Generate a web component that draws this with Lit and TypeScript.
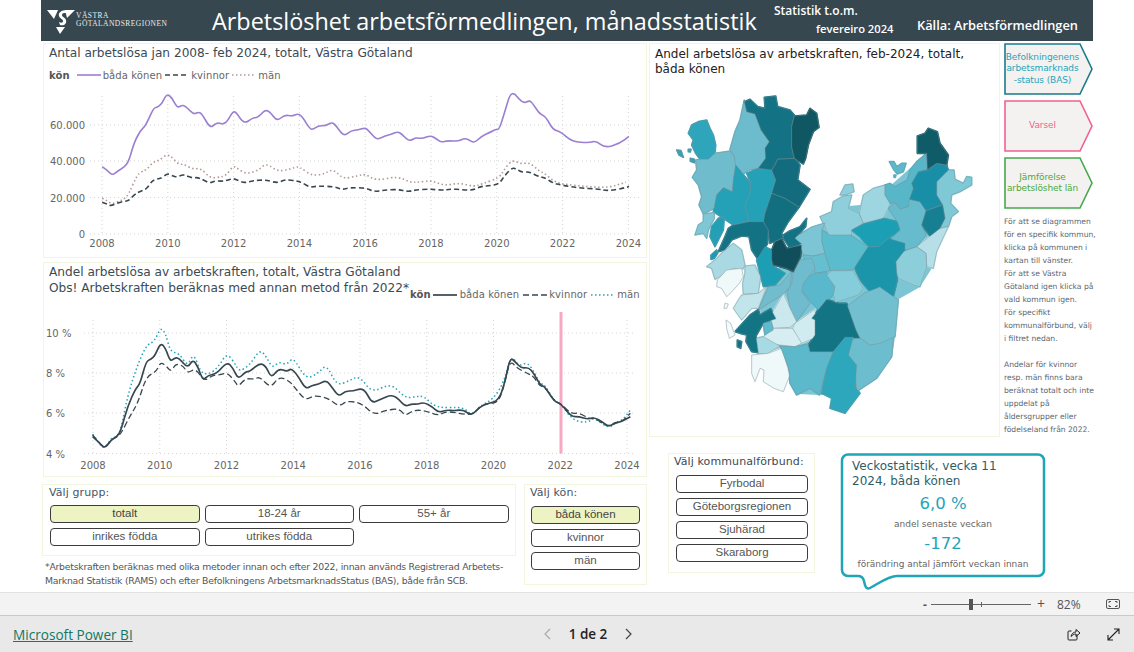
import { LitElement, css, html, svg } from 'lit';
import { customElement } from 'lit/decorators.js';

type P = [number, number];
type Line = { color: string; width: number; dash?: string; pts: P[] };

// traced from the report: x,y in crop units, scaled down in toPath()
const c1Both: P[] = [[283,503],[297,513],[311,530],[330,513],[345,505],[358,487],[373,430],[390,395],[405,380],[427,327],[437,325],[450,315],[464,284],[478,295],[493,327],[508,318],[517,322],[530,337],[542,345],[553,339],[563,345],[585,387],[600,375],[610,371],[620,376],[633,368],[650,336],[660,342],[680,375],[705,357],[715,356],[727,348],[740,332],[755,340],[772,367],[795,347],[815,352],[830,344],[842,350],[865,390],[875,391],[887,381],[910,380],[925,370],[935,376],[955,405],[965,408],[980,395],[1000,393],[1020,386],[1030,396],[1050,420],[1060,418],[1075,411],[1095,405],[1110,398],[1122,405],[1140,424],[1150,424],[1160,416],[1180,419],[1203,409],[1220,420],[1232,430],[1250,425],[1280,427],[1295,419],[1307,420],[1325,433],[1345,412],[1370,400],[1385,391],[1395,392],[1410,340],[1425,285],[1438,283],[1450,300],[1465,313],[1480,304],[1490,315],[1508,345],[1525,352],[1545,392],[1568,399],[1599,428],[1648,432],[1666,425],[1691,447],[1733,433],[1758,412]];
const c1Kv: P[] = [[283,610],[297,615],[308,621],[325,612],[345,607],[358,605],[375,585],[390,577],[408,570],[423,545],[437,540],[450,537],[466,523],[480,530],[492,535],[508,527],[520,530],[535,537],[550,535],[565,542],[585,553],[600,545],[620,547],[635,543],[650,538],[665,545],[682,552],[705,545],[740,542],[775,553],[795,541],[830,546],[845,552],[865,565],[885,561],[935,563],[955,572],[975,566],[1020,566],[1045,578],[1070,574],[1110,571],[1140,578],[1160,573],[1200,570],[1235,574],[1260,570],[1290,572],[1320,574],[1345,562],[1370,560],[1395,555],[1410,530],[1432,505],[1445,512],[1460,520],[1480,518],[1505,533],[1525,537],[1545,552],[1568,558],[1618,567],[1672,570],[1702,576],[1753,565],[1758,562]];
const c1Man: P[] = [[283,598],[297,605],[310,615],[330,607],[345,600],[358,585],[380,530],[395,517],[408,512],[425,490],[445,483],[464,466],[480,475],[495,495],[515,497],[535,510],[560,508],[585,537],[610,535],[630,530],[650,500],[665,510],[685,525],[720,515],[742,492],[775,518],[810,510],[830,502],[845,510],[870,530],[905,525],[925,512],[940,520],[960,540],[1000,530],[1020,525],[1050,545],[1110,532],[1145,550],[1170,550],[1205,544],[1240,560],[1285,552],[1325,563],[1345,555],[1395,537],[1410,510],[1432,482],[1455,495],[1480,490],[1505,515],[1525,525],[1545,545],[1568,555],[1640,563],[1700,566],[1750,550]];

const c2Both: P[] = [[221,530],[235,545],[250,567],[265,540],[280,530],[290,510],[305,440],[325,385],[335,373],[350,303],[362,298],[372,285],[385,248],[397,265],[408,305],[420,293],[430,295],[450,325],[463,298],[475,320],[487,362],[500,345],[520,342],[545,305],[560,325],[572,358],[590,335],[600,335],[625,308],[640,320],[652,355],[670,325],[690,335],[700,325],[715,345],[735,388],[750,376],[765,373],[785,360],[800,385],[815,410],[830,393],[850,393],[868,385],[880,395],[895,430],[915,418],[940,405],[955,412],[975,440],[990,432],[1005,433],[1020,427],[1040,440],[1055,458],[1075,450],[1095,452],[1115,449],[1135,468],[1155,440],[1175,430],[1200,422],[1215,370],[1228,292],[1240,305],[1255,325],[1272,322],[1285,340],[1300,375],[1312,380],[1335,425],[1350,430],[1375,470],[1395,470],[1415,478],[1430,472],[1450,485],[1465,500],[1480,490],[1500,483],[1518,470]];
const c2Kv: P[] = [[221,525],[235,545],[250,565],[265,540],[280,530],[290,520],[310,470],[330,430],[350,350],[375,335],[385,305],[400,320],[410,335],[422,310],[440,318],[450,340],[470,325],[490,365],[510,345],[530,345],[545,337],[565,365],[572,380],[590,355],[610,358],[625,350],[650,385],[670,350],[695,362],[710,385],[735,422],[755,405],[790,415],[815,440],[835,422],[870,430],[900,465],[925,452],[960,445],[975,468],[995,450],[1025,452],[1055,468],[1075,452],[1135,468],[1155,440],[1175,430],[1200,428],[1215,370],[1228,300],[1245,325],[1270,340],[1285,350],[1300,380],[1312,380],[1335,425],[1350,430],[1375,462],[1395,458],[1420,478],[1430,472],[1450,490],[1465,500],[1480,487],[1500,483],[1518,460]];
const c2Man: P[] = [[221,523],[235,548],[250,568],[265,535],[280,530],[290,505],[305,410],[325,330],[350,255],[370,245],[385,202],[397,220],[408,275],[430,280],[450,320],[465,278],[480,335],[500,345],[525,320],[545,278],[565,312],[575,335],[600,315],[625,268],[640,290],[655,325],[670,305],[690,315],[705,290],[735,358],[765,340],[785,312],[810,378],[840,362],[865,347],[895,400],[940,368],[975,415],[1000,410],[1020,408],[1050,445],[1115,440],[1135,468],[1155,438],[1190,415],[1215,360],[1230,285],[1250,320],[1270,305],[1290,345],[1300,370],[1312,375],[1335,425],[1350,430],[1380,482],[1415,488],[1430,472],[1465,505],[1480,490],[1500,480],[1518,450]];

// smooth path through the midpoints, the report draws its lines smoothed
const toPath = (pts: P[], sx: number, ox: number, oy: number) => {
  const p = pts.map(([x, y]): P => [x / sx - ox, y / 3 - oy]);
  let d = `M${p[0][0].toFixed(1)} ${p[0][1].toFixed(1)}`;
  for (let i = 1; i < p.length - 1; i++) {
    const mx = (p[i][0] + p[i + 1][0]) / 2;
    const my = (p[i][1] + p[i + 1][1]) / 2;
    d += `Q${p[i][0].toFixed(1)} ${p[i][1].toFixed(1)} ${mx.toFixed(1)} ${my.toFixed(1)}`;
  }
  const last = p[p.length - 1];
  return `${d}L${last[0].toFixed(1)} ${last[1].toFixed(1)}`;
};

// land under the municipalities, so that what tracing left open stays coloured
const landPatch = '800,232 820,226 838,207 860,205 890,186 925,155 948,200 945,228 935,252 932,268 920,287 897,300 895,337 892,357 877,378 857,392 848,395 820,395 797,394 788,367 765,340 760,310 768,290 785,255';

// municipalities, grouped by the crop they were traced from: [page x, page y, regions]
const kommunGroups: [number, number, [string, string][]][] = [
  [660, 80, [
    ['#6cbdcd', '575,770 590,765 630,795 660,785 700,770 695,830 650,895 590,935 585,860 565,825'],
  ]],
  [820, 120, [
    ['#8ecfdb', '0,290 35,275 40,245 70,228 95,225 85,265 118,280 130,310 95,330 95,345 55,350 30,355 10,310'],
    ['#8ecfdb', '60,225 75,195 98,192 102,215 75,225'],
    ['#5cb8cb', '208,125 222,125 230,140 245,130 258,130 250,155 232,162 222,150'],
    ['#5cb8cb', '222,165 228,165 226,172 222,172'],
    ['#9dd6e0', '118,280 130,225 160,205 195,195 195,225 210,250 205,265 190,295 130,310'],
    ['#58b6c9', '320,100 322,148 295,155 275,190 280,205 265,260 240,268 225,248 210,250 195,225 195,195 210,190 225,200 262,180 270,150 290,125'],
    ['#7fc8d5', '350,185 385,150 402,150 405,178 430,190 440,170 455,172 455,195 420,215 395,225 392,250 415,275 395,290 385,320 360,325 375,295 368,255 350,225'],
    ['#b6dfe7', '290,380 330,348 360,325 385,320 350,395 340,445 320,440 318,400'],
    ['#8ccfdb', '222,440 235,400 290,380 318,400 320,440 300,500 280,495 235,475'],
    ['#66bccd', '205,265 225,248 240,268 265,260 268,238 300,245 318,272 305,315 318,345 290,380 255,390 245,370 210,360 240,330 232,305'],
    ['#1a95aa', '100,435 145,380 175,380 205,355 255,370 255,390 228,425 232,480 220,530 195,525 180,500 150,515 120,480'],
    ['#1b9fb5', '95,330 130,312 190,295 232,305 240,330 205,355 175,380 145,380 120,350'],
    ['#188fa6', '295,155 325,150 350,130 380,135 385,150 350,185 350,225 368,255 318,272 300,245 268,238 280,205 275,190'],
    ['#177f92', '305,315 318,272 368,255 375,295 360,325 330,348'],
    ['#0f5b68', '292,48 315,40 325,25 352,35 360,70 385,105 380,135 350,130 322,148 320,100 292,100'],
  ]],
  [780, 230, [
    ['#7cc5d4', '39,25 96,-9 135,-21 126,0 126,35 135,70 100,78 70,75 60,45'],
    ['#5abccc', '126,0 150,15 210,15 264,50 219,120 150,122 135,70 126,35'],
    ['#66bfd0', '70,75 100,78 135,70 150,122 105,130 102,105 75,90'],
    ['#59b8cb', '62,178 78,145 105,130 138,125 165,170 160,195 115,238 95,218'],
    ['#85cddb', '140,135 155,122 220,122 250,175 235,195 165,218 160,195 165,170'],
    ['#72c0cf', '200,230 255,188 300,172 355,210 345,320 300,340 270,345 235,320'],
  ]],
  [675, 90, [
    ['#2ea5bb', '40,130 50,105 70,95 95,90 105,115 115,135 122,165 120,190 100,208 75,208 62,190 50,165 55,150'],
    ['#6fbccd', '62,210 75,208 100,208 120,190 165,183 178,200 182,225 175,270 172,305 145,293 125,315 118,355 85,372 72,345 80,320 70,285 52,262 65,240'],
    ['#6cbccd', '208,30 215,65 240,72 258,120 283,155 270,175 272,205 250,235 222,240 205,252 182,225 178,200 165,178 180,125 195,90'],
    ['#24a0b7', '182,225 195,240 210,260 228,280 225,310 210,345 222,395 175,405 145,385 115,365 125,315 145,293 172,305 175,270'],
    ['#24a0b7', '215,250 250,235 290,240 302,270 295,300 270,370 265,395 222,395 210,345 225,310 228,280'],
    ['#137284', '208,35 225,28 248,50 270,55 268,22 302,18 308,50 345,60 358,75 350,110 350,170 358,205 308,208 300,225 290,240 250,235 272,205 270,175 283,155 258,120 240,72 215,65'],
    ['#0f5763', '358,78 395,75 405,55 425,70 432,112 415,125 400,165 392,205 385,222 358,205 350,170 350,110'],
    ['#126c7e', '308,208 358,205 375,225 368,270 405,298 372,352 330,325 290,310 302,270 290,240 300,225'],
    ['#126f80', '290,310 330,325 372,352 340,395 320,430 325,445 285,460 278,420 265,395 270,370'],
    ['#7fc7d4', '85,372 118,368 118,385 100,420 95,445 85,430 60,435 70,405 85,395'],
    ['#23a0b6', '130,385 148,380 145,420 120,470 105,440 110,410'],
    ['#137284', '175,405 222,395 265,395 280,420 278,460 250,510 230,480 222,440 200,438 170,450 150,480 130,485 150,440 160,415'],
    ['#1a9bb0', '108,495 125,480 128,490 118,505 108,508'],
    ['#137284', '325,435 345,422 375,410 395,385 392,410 360,445 380,462 345,475 325,445'],
    ['#3aa0b5', '5,180 18,182 25,202 12,195'],
    ['#3aa0b5', '40,178 48,178 46,186 40,185'],
    ['#3aa0b5', '46,205 58,208 58,218 46,214'],
  ]],
  [700, 240, [
    ['#a9d9e2', '20,80 45,60 70,35 100,10 125,30 135,75 128,88 100,85 85,95 60,110 45,118 35,85'],
    ['#f0f9fa', '52,120 80,90 125,85 130,110 118,130 100,150 80,170 65,145 50,140'],
    ['#b1dde6', '135,78 165,75 182,110 175,160 130,162 128,130 135,100'],
    ['#c2e5ec', '125,165 175,160 200,140 175,205 155,205 125,240 100,205 115,180'],
    ['#72bdcd', '205,140 240,135 275,95 270,140 248,165 205,190 175,210'],
    ['#70bccf', '280,100 300,60 335,55 345,85 310,130 305,155 330,190 290,245 268,200 262,155 275,130'],
    ['#cae8ee', '250,160 268,200 290,245 270,262 220,265 208,230 225,205'],
    ['#d0ecf0', '285,250 345,208 352,290 300,312 278,265'],
    ['#d6eef2', '190,290 220,265 278,265 305,310 285,320 240,315 195,310'],
    ['#a7dbe4', '165,295 190,290 240,318 200,342 172,340'],
    ['#137484', '105,275 150,225 175,208 180,225 212,206 228,236 190,250 168,288 175,338 155,335 138,305 140,285 120,280'],
    ['#5cbccd', '190,250 215,245 220,270 195,285'],
    ['#eff9fa', '155,345 205,340 245,325 270,405 250,455 222,445 190,425 192,390 180,385 165,425 155,400'],
    ['#5cb8cb', '240,318 285,320 325,312 330,335 400,335 380,385 358,465 330,445 290,465 270,430 265,380'],
    ['#137484', '335,235 380,178 415,190 440,190 468,270 480,295 435,295 400,335 330,335 325,315 345,285 345,240'],
    ['#2ca7bc', '400,335 435,292 460,292 445,345 470,375 465,440 480,460 435,520 390,505 395,475 365,460 380,385'],
    ['#1c9fb5', '170,60 195,20 215,30 215,75 255,100 225,135 190,140'],
    ['#0f4e5a', '215,30 225,5 245,-4 260,25 305,15 302,50 280,95 258,85 220,75 215,60'],
    ['#f4fbfc', '75,190 85,192 80,205 72,205'],
    ['#f4fbfc', '78,240 92,250 105,285 88,295 80,265'],
    ['#137284', '112,300 125,305 122,325 112,320'],
  ]],
];

@customElement('line-chart')
export class LineChart extends LitElement {
  static properties = { kind: { type: String } };
  kind = 'antal';

  static styles = css`
    :host { display: block; }
    svg { display: block; }
    text { font-family: 'DejaVu Sans', sans-serif; font-size: 10px; fill: #666; }
    .grid { stroke: #d4d4d4; stroke-width: 1; stroke-dasharray: 1 3; }
  `;

  render() {
    const antal = this.kind === 'antal';
    const w = 604;
    const h = antal ? 172 : 164;
    // svg top-left in page coordinates
    const ox = 43;
    const oy = antal ? 85 : 311;
    const years = [2008, 2010, 2012, 2014, 2016, 2018, 2020, 2022, 2024];
    const x0 = antal ? 101 : 92;
    const step = antal ? 65.8 : 66.75;
    const ticks = antal
      ? [[235, '0'], [198.5, '20.000'], [162, '40.000'], [126, '60.000']]
      : [[453.5, '4 %'], [413, '6 %'], [373, '8 %'], [333, '10 %']];
    const lines: Line[] = antal
      ? [
          { color: '#9b7fd0', width: 1.6, pts: c1Both },
          { color: '#b09a96', width: 1.6, dash: '1.5 2.5', pts: c1Man },
          { color: '#37474f', width: 1.6, dash: '5 3', pts: c1Kv },
        ]
      : [
          { color: '#1ea5ba', width: 1.5, dash: '1.5 2.5', pts: c2Man },
          { color: '#37474f', width: 1.3, dash: '6 3', pts: c2Kv },
          { color: '#37474f', width: 1.7, pts: c2Both },
        ];
    const sx = antal ? 2.8 : 2.412;
    // the second chart was traced from a crop starting 260px down
    const lineOy = antal ? oy : oy - 260;
    const top = antal ? 97 - oy : 320 - oy;
    const bottom = (antal ? 235 : 453.5) - oy;
    return html`<svg width=${w} height=${h} viewBox="0 0 ${w} ${h}">
      ${ticks.map(([y, label]) => svg`
        <line class="grid" x1=${antal ? 89 - ox : 83 - ox} x2=${antal ? 640 - ox : 632 - ox} y1=${(y as number) - oy} y2=${(y as number) - oy}></line>
        <text x=${antal ? 84 - ox : 45 - ox} y=${(y as number) - oy + 4} text-anchor=${antal ? 'end' : 'start'}>${label}</text>`)}
      ${years.map((yr, i) => svg`
        <line class="grid" x1=${x0 + i * step - ox} x2=${x0 + i * step - ox} y1=${top} y2=${bottom}></line>
        <text x=${x0 + i * step - ox} y=${bottom + (antal ? 13 : 15)} text-anchor="middle">${yr}</text>`)}
      ${antal ? '' : svg`<line x1=${560 - ox} x2=${560 - ox} y1=${312 - oy} y2=${bottom} stroke="#f7a8c4" stroke-width="3"></line>`}
      ${lines.map((l) => svg`<path d=${toPath(l.pts, sx, ox, lineOy)} fill="none" stroke=${l.color}
        stroke-width=${l.width} stroke-dasharray=${l.dash ?? 'none'} stroke-linejoin="round"></path>`)}
    </svg>`;
  }
}

@customElement('app-root')
export class AppRoot extends LitElement {
  static styles = css`
    :host {
      display: block;
      width: 1134px;
      height: 652px;
      overflow: hidden;
      background: #fff;
      font-family: 'DejaVu Sans', sans-serif;
      color: #3b4a54;
    }
    .canvas { height: 592px; padding-left: 41px; box-sizing: border-box; }
    .head {
      width: 1052px;
      height: 41px;
      background: #37474f;
      color: #fff;
      display: grid;
      grid-template-columns: 171px 562px 143px auto;
      align-items: center;
      font-family: 'Open Sans', sans-serif;
    }
    .logo { display: flex; align-items: center; padding-left: 6px; gap: 1px; }
    .logo-text {
      font: 7.5px/8px 'Liberation Serif', serif;
      letter-spacing: 0.46px;
      color: #e8ecee;
      margin-top: -1px;
    }
    .title { font-size: 23.4px; white-space: nowrap; }
    .period { font-size: 12px; font-weight: 600; align-self: stretch; padding-top: 2px; line-height: 17px; }
    .period div + div { padding-left: 42px; padding-top: 1px; font-size: 11.2px; }
    .source { font-size: 12.8px; font-weight: 600; white-space: nowrap; padding-top: 8px; }

    .body { display: flex; padding-left: 2px; padding-top: 2px; }
    .left { width: 604px; display: flex; flex-direction: column; gap: 4px; }
    .right { margin-left: 2px; width: 444px; }
    .card { border: 1px solid #f3f6de; box-sizing: border-box; }
    .chart { height: 215px; display: flex; flex-direction: column; justify-content: flex-end; padding-bottom: 1px; }
    .chart-title { font-size: 12.15px; line-height: 16px; padding: 1px 0 0 5px; color: #3b4a54; white-space: nowrap; }
    .legend {
      display: flex;
      align-items: center;
      font-size: 10px;
      letter-spacing: 0.1px;
      color: #666;
      gap: 2px;
      white-space: nowrap;
    }
    .legend b { color: #555; margin-right: 5px; }
    .legend span { margin-right: 1px; }
    .legend svg { display: block; }
    .c1-legend { padding: 7px 0 0 5px; height: 14px; }
    .c1-head { flex: 1; }
    .c2-head { flex: 1; display: flex; align-items: flex-start; }
    .c2-title { width: 361px; flex: none; }
    .c2-head .legend { margin: 26px 0 0 0; gap: 2.5px; }
    .c2-head .legend b { margin-right: 0; }

    .bottom { display: flex; gap: 8px; margin-top: 3px; margin-left: -1px; }
    .bottom-main { width: 475px; }
    .filter { padding: 1px 0 0 7px; box-sizing: border-box; }
    .filter-label { font-size: 11px; line-height: 14px; color: #4a5560; letter-spacing: 0.1px; margin-left: -1px; }
    .group { height: 72px; }
    .group-grid {
      display: grid;
      grid-template-columns: repeat(3, 149.5px);
      gap: 5px;
      margin-top: 5px;
    }
    .btn {
      height: 18px;
      box-sizing: border-box;
      border: 1px solid #3c3c3c;
      border-bottom-width: 1.5px;
      border-radius: 4px;
      background: #fff;
      font: 11.5px/15px 'Liberation Sans', sans-serif;
      color: #555;
      text-align: center;
      white-space: nowrap;
    }
    .btn.on { background: #eef3c3; color: #444; }
    .note {
      font: 9.3px/14px 'DejaVu Sans', sans-serif;
      color: #555;
      padding: 4px 0 0 3px;
      white-space: nowrap;
      letter-spacing: -0.24px;
    }
    .kon { width: 123px; height: 101px; flex: none; padding-left: 6px; }
    .stack { display: flex; flex-direction: column; gap: 5px; margin-top: 6px; }
    .kon .stack { width: 109px; }

    .top-row { display: flex; height: 394px; }
    .map { width: 351px; box-sizing: border-box; }
    .map-title { font-size: 12px; line-height: 15px; padding: 3px 0 0 5px; color: #222; height: 33px; box-sizing: border-box; }
    .map svg { display: block; margin-left: 10px; margin-top: 3px; }
    .side { margin-left: 4px; width: 89px; display: flex; flex-direction: column; }
    .arrow { display: grid; height: 52px; margin-bottom: 5px; }
    .arrow > * { grid-area: 1 / 1; }
    .arrow-label {
      font-size: 9px;
      line-height: 11.5px;
      text-align: center;
      width: 75px;
      align-self: center;
      letter-spacing: -0.1px;
      margin-left: 1px;
    }
    .teal { color: #1ea5ba; }
    .pink { color: #f0628f; }
    .green { color: #4ea83e; }
    .help {
      font: 7.6px/13px 'DejaVu Sans', sans-serif;
      color: #5b6670;
      margin-top: 1px;
      white-space: nowrap;
    }
    .lower { display: flex; margin-top: 16px; margin-left: 19px; gap: 25px; }
    .kommun { width: 147px; height: 120px; padding-left: 7px; flex: none; }
    .kommun .filter-label { color: #3b4a54; margin-left: -2px; }
    .kommun .stack { margin-top: 6px; width: 132px; }
    .bubble { display: grid; width: 206px; height: 139px; }
    .bubble > * { grid-area: 1 / 1; }
    .bubble-body { padding: 6px 0 0 12px; }
    .bubble-title { font-size: 12px; line-height: 15px; color: #2e5d68; }
    .kpi { text-align: center; margin-left: -12px; width: 206px; }
    .kpi b { display: block; font-weight: 400; font-size: 16.5px; line-height: 18px; color: #1ea5ba; margin-top: 6px; }
    .kpi small { display: block; font-size: 9px; line-height: 14px; color: #666; margin-top: 4px; }
    .kpi + .kpi b { margin-top: 4px; }

    .zoombar {
      height: 23px;
      box-sizing: border-box;
      background: #f3f3f3;
      border-top: 1px solid #e1e1e1;
      display: flex;
      align-items: center;
      justify-content: flex-end;
      color: #555;
      font: 12px 'Open Sans', sans-serif;
    }
    .minus { font-weight: 700; margin-right: 4px; }
    .slider { width: 100px; height: 11px; display: block; }
    .plus { margin: 0 0 0 6px; font-size: 14px; line-height: 14px; }
    .pct { margin-left: 12px; width: 49px; }
    .fit { margin-right: 14px; display: block; }
    .foot {
      height: 37px;
      box-sizing: border-box;
      background: #e9e9e9;
      border-top: 1px solid #c9c9c9;
      display: grid;
      grid-template-columns: 530px 90px 1fr auto auto;
      align-items: center;
      padding: 0 14px 0 13px;
    }
    .brand { font: 13.6px 'Open Sans', sans-serif; color: #117865; text-decoration: underline; }
    .pager { display: flex; align-items: center; justify-content: space-between; width: 90px; font: 600 13.5px 'Open Sans', sans-serif; color: #222; }
    .share { margin-right: 26px; display: block; }
    .foot svg { display: block; }
  `;

  private legend(items: { name: string; color: string; width: number; dash?: string }[]) {
    return html`<b>kön</b>${items.map((i) => html`
      <svg width="24" height="4"><line x1="0" x2="24" y1="2" y2="2" stroke=${i.color}
        stroke-width=${i.width} stroke-dasharray=${i.dash ?? 'none'}></line></svg>
      <span>${i.name}</span>`)}`;
  }

  private arrow(stroke: string, cls: string, label: unknown) {
    return html`<div class="arrow">
      <svg width="89" height="52"><polygon points="1,1 76,1 88,26 76,51 1,51" fill="#f3f2f1" stroke=${stroke} stroke-width="1.6"></polygon></svg>
      <div class="arrow-label ${cls}">${label}</div>
    </div>`;
  }

  private map() {
    // first pass closes the hairline gaps between neighbours, second draws the borders
    return html`<svg width="320" height="340" viewBox="660 80 320 340">
      <polygon points=${landPatch} fill="#7cc5d4"></polygon>
      ${kommunGroups.map(([x, y, regions]) => svg`<g transform="translate(${x} ${y}) scale(${1 / 3})">
        ${regions.map(([fill, pts]) => svg`<polygon points=${pts} fill=${fill} stroke=${fill} stroke-width="5" stroke-linejoin="round"></polygon>`)}
      </g>`)}
      ${kommunGroups.map(([x, y, regions]) => svg`<g transform="translate(${x} ${y}) scale(${1 / 3})">
        ${regions.map(([fill, pts]) => svg`<polygon points=${pts} fill=${fill} stroke="#7f9197" stroke-opacity="0.7" stroke-width="2" stroke-linejoin="round"></polygon>`)}
      </g>`)}
    </svg>`;
  }

  render() {
    return html`
      <div class="canvas">
        <header class="head">
          <div class="logo">
            <svg width="28" height="26" viewBox="0 0 28 26">
              <polygon points="0,2 11,2 7,11" fill="#fff"></polygon>
              <path d="M20,2 C14,2 11,5 12,8 C13,11 16,11 16,13 C16,15 14,15 12,14 L13,17 C17,18 20,16 19,12 C18,9 15,9 15,7 C15,5 17,5 19,5 Z" fill="#fff"></path>
              <polygon points="18,2 28,2 20,10" fill="#fff"></polygon>
              <polygon points="9,19 18,19 13,26" fill="#fff"></polygon>
            </svg>
            <div class="logo-text">VÄSTRA<br />GÖTALANDSREGIONEN</div>
          </div>
          <div class="title">Arbetslöshet arbetsförmedlingen, månadsstatistik</div>
          <div class="period"><div>Statistik t.o.m.</div><div>fevereiro 2024</div></div>
          <div class="source">Källa: Arbetsförmedlingen</div>
        </header>
        <div class="body">
          <div class="left">
            <section class="card chart">
              <div class="c1-head">
                <div class="chart-title">Antal arbetslösa jan 2008- feb 2024, totalt, Västra Götaland</div>
                <div class="legend c1-legend">${this.legend([
                  { name: 'båda könen', color: '#9b7fd0', width: 1.6 },
                  { name: 'kvinnor', color: '#37474f', width: 1.6, dash: '5 3' },
                  { name: 'män', color: '#b09a96', width: 1.6, dash: '1.5 2.5' },
                ])}</div>
              </div>
              <line-chart kind="antal"></line-chart>
            </section>
            <section class="card chart">
              <div class="c2-head">
                <div class="chart-title c2-title">Andel arbetslösa av arbetskraften, totalt, Västra Götaland<br />Obs! Arbetskraften beräknas med annan metod från 2022*</div>
                <div class="legend">${this.legend([
                  { name: 'båda könen', color: '#37474f', width: 1.7 },
                  { name: 'kvinnor', color: '#37474f', width: 1.4, dash: '6 3' },
                  { name: 'män', color: '#1ea5ba', width: 1.5, dash: '1.5 2.5' },
                ])}</div>
              </div>
              <line-chart kind="andel"></line-chart>
            </section>
            <div class="bottom">
              <div class="bottom-main">
                <div class="card filter group">
                  <div class="filter-label">Välj grupp:</div>
                  <div class="group-grid">
                    <div class="btn on">totalt</div>
                    <div class="btn">18-24 år</div>
                    <div class="btn">55+ år</div>
                    <div class="btn">inrikes födda</div>
                    <div class="btn">utrikes födda</div>
                  </div>
                </div>
                <div class="note">*Arbetskraften beräknas med olika metoder innan och efter 2022, innan används Registrerad Arbetets-<br />Marknad Statistik (RAMS) och efter Befolkningens ArbetsmarknadsStatus (BAS), både från SCB.</div>
              </div>
              <div class="card filter kon">
                <div class="filter-label">Välj kön:</div>
                <div class="stack">
                  <div class="btn on">båda könen</div>
                  <div class="btn">kvinnor</div>
                  <div class="btn">män</div>
                </div>
              </div>
            </div>
          </div>
          <div class="right">
            <div class="top-row">
              <section class="card map">
                <div class="map-title">Andel arbetslösa av arbetskraften, feb-2024, totalt,<br />båda könen</div>
                ${this.map()}
              </section>
              <div class="side">
                ${this.arrow('#1b7a8c', 'teal', html`Befolkningenens<br />arbetsmarknads<br />-status (BAS)`)}
                ${this.arrow('#f0628f', 'pink', 'Varsel')}
                ${this.arrow('#46a84e', 'green', html`Jämförelse<br />arbetslöshet län`)}
                <div class="help">För att se diagrammen<br />för en specifik kommun,<br />klicka på kommunen i<br />kartan till vänster.<br />För att se Västra<br />Götaland igen klicka på<br />vald kommun igen.<br />För specifikt<br />kommunalförbund, välj<br />i filtret nedan.<br /><br />Andelar för kvinnor<br />resp. män finns bara<br />beräknat totalt och inte<br />uppdelat på<br />åldersgrupper eller<br />födelseland från 2022.</div>
              </div>
            </div>
            <div class="lower">
              <div class="card filter kommun">
                <div class="filter-label">Välj kommunalförbund:</div>
                <div class="stack">
                  <div class="btn">Fyrbodal</div>
                  <div class="btn">Göteborgsregionen</div>
                  <div class="btn">Sjuhärad</div>
                  <div class="btn">Skaraborg</div>
                </div>
              </div>
              <div class="bubble">
                <svg width="206" height="139"><path d="M8 1.5H198a6 6 0 0 1 6 6V117a6 6 0 0 1-6 6H57C48 123 38 131 30 135C26 137 25 133 24 128C23 124 21 123 18 123H8a6 6 0 0 1-6-6V7.5a6 6 0 0 1 6-6z" fill="#fff" stroke="#1ea5b8" stroke-width="2.5"></path></svg>
                <div class="bubble-body">
                  <div class="bubble-title">Veckostatistik, vecka 11<br />2024, båda könen</div>
                  <div class="kpi"><b>6,0 %</b><small>andel senaste veckan</small></div>
                  <div class="kpi"><b>-172</b><small>förändring antal jämfört veckan innan</small></div>
                </div>
              </div>
            </div>
          </div>
        </div>
      </div>
      <div class="zoombar">
        <span class="minus">-</span>
        <svg class="slider" viewBox="0 0 100 11">
          <line x1="0" x2="100" y1="5.5" y2="5.5" stroke="#666"></line>
          <line x1="50.5" x2="50.5" y1="3" y2="8" stroke="#666"></line>
          <rect x="38" y="0" width="4" height="11" fill="#555"></rect>
        </svg>
        <span class="plus">+</span>
        <span class="pct">82%</span>
        <svg class="fit" width="14" height="10" viewBox="0 0 14 10">
          <rect x="0.5" y="0.5" width="13" height="9" rx="1.5" fill="none" stroke="#555"></rect>
          <path d="M3 4V2.5H5M11 4V2.5H9M3 6V7.5H5M11 6V7.5H9" fill="none" stroke="#555"></path>
        </svg>
      </div>
      <footer class="foot">
        <a class="brand">Microsoft Power BI</a>
        <div class="pager">
          <svg width="10" height="12" viewBox="0 0 10 12"><path d="M7 1L2 6l5 5" fill="none" stroke="#aaa" stroke-width="1.2"></path></svg>
          <span>1 de 2</span>
          <svg width="10" height="12" viewBox="0 0 10 12"><path d="M3 1l5 5-5 5" fill="none" stroke="#444" stroke-width="1.2"></path></svg>
        </div>
        <span></span>
        <svg class="share" width="14" height="14" viewBox="0 0 14 14">
          <path d="M10 7.5V12a1 1 0 0 1-1 1H2a1 1 0 0 1-1-1V5a1 1 0 0 1 1-1h2.5" fill="none" stroke="#222"></path>
          <path d="M4 9.5C4.5 6.5 7 5 9 5V2.5L13 6 9 9.5V7C7 7 5.5 8 4 9.5z" fill="none" stroke="#222"></path>
        </svg>
        <svg width="13" height="13" viewBox="0 0 13 13">
          <path d="M1 12L12 1M7 1h5v5M1 7v5h5" fill="none" stroke="#222" stroke-width="1.1"></path>
        </svg>
      </footer>
    `;
  }
}
